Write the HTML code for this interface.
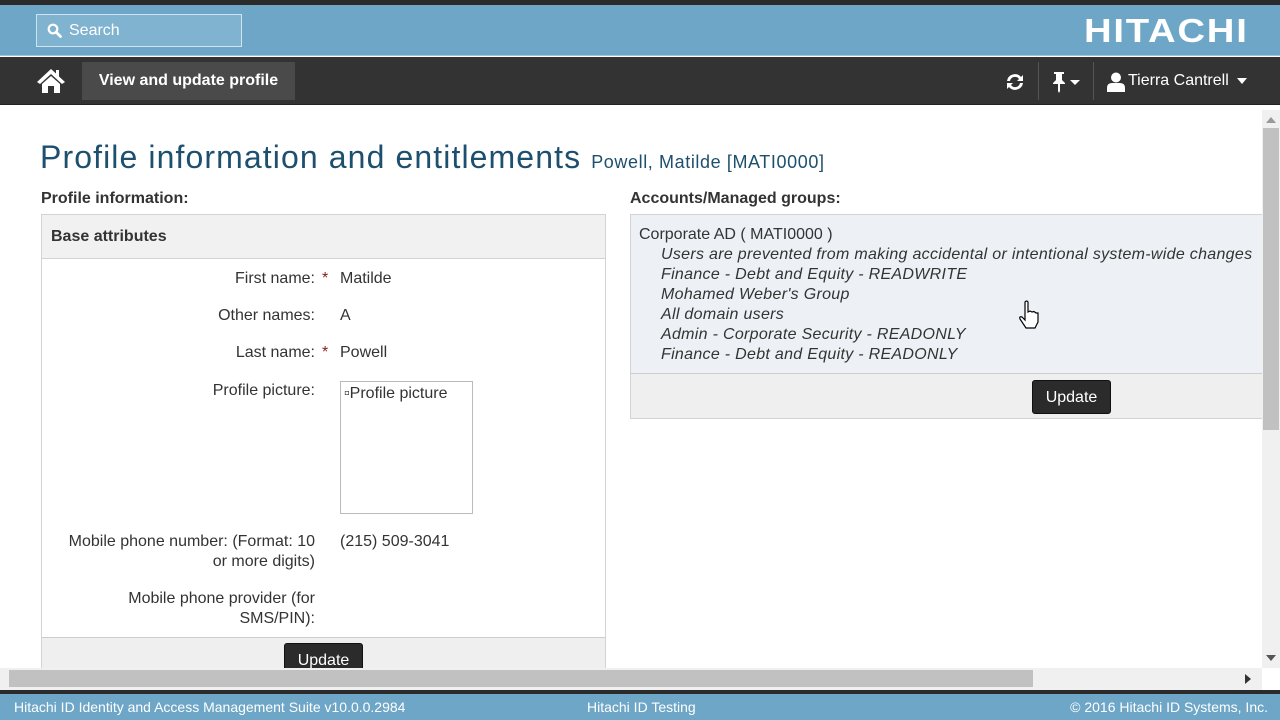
<!DOCTYPE html>
<html><head><meta charset="utf-8"><style>
*{box-sizing:border-box;margin:0;padding:0}
body{width:1280px;height:720px;overflow:hidden;font-family:"Liberation Sans",sans-serif;background:#fff;position:relative;color:#333}
.abs{position:absolute}
#top{left:0;top:0;width:1280px;height:5px;background:#2b2b2b}
#hdr{left:0;top:5px;width:1280px;height:51px;background:#6da6c7;border-bottom:1px solid #9cc8de}
#search{left:36px;top:14px;width:206px;height:33px;border:1px solid #cfe4ef;background:#7fb3d0;color:#fff;font-size:16px;line-height:31px;padding-left:32px}
#logo{left:1084px;top:12px;color:#fff;font-weight:bold;font-size:33px;letter-spacing:1.5px;transform:scaleX(1.16);transform-origin:left}
#nav{left:0;top:57px;width:1280px;height:48px;background:#333;border-bottom:1px solid #222}
#crumb{left:82px;top:62px;width:213px;height:38px;background:#4a4a4a;color:#fff;font-weight:bold;font-size:16px;line-height:38px;text-align:center}
.navt{color:#fff;font-size:16px}
.sep{top:62px;width:1px;height:38px;background:#555}
h1{position:absolute;left:40px;top:139px;font-weight:normal;font-size:32px;letter-spacing:1.1px;color:#1d4f6e;white-space:nowrap}
h1 small{font-size:18px;letter-spacing:0.6px;color:#1d4f6e}
.lbl{font-size:16px;color:#333}
.b{font-weight:bold}
#lp{left:41px;top:214px;width:565px;height:460px;border:1px solid #d3d3d3}
#lph{height:44px;background:#f1f1f1;border-bottom:1px solid #d3d3d3;font-weight:bold;font-size:16px;line-height:43px;padding-left:9px}
.r{position:absolute;font-size:16px;color:#333}
.star{color:#8b1a1a}
#pic{left:340px;top:381px;width:133px;height:133px;border:1px solid #bbb;font-size:16px;padding:3px 0 0 3px;white-space:nowrap;overflow:hidden}
#lpf{left:42px;top:637px;width:563px;height:37px;background:#efefef;border-top:1px solid #ccc}
.btn{position:absolute;background:#2b2b2b;color:#fff;font-size:16px;text-align:center;border-radius:3px;border:1px solid #111}
#rp{left:630px;top:214px;width:632px;height:205px;border:1px solid #d3d3d3;border-right:none;background:#edf1f5}
#rpf{left:631px;top:373px;width:631px;height:45px;background:#efefef;border-top:1px solid #ccc}
.it{position:absolute;left:661px;font-style:italic;font-size:16px;color:#333;white-space:nowrap;letter-spacing:0.3px}
#vs{left:1262px;top:110px;width:18px;height:558px;background:#f0f0f0}
#hs{left:0;top:668px;width:1262px;height:22px;background:#f0f0f0}
#foot{left:0;top:690px;width:1280px;height:30px;background:#6da6c7;border-top:4px solid #2b2b2b;color:#fff;font-size:14px;line-height:26px}
</style></head><body>
<div id="top" class="abs"></div>
<div id="hdr" class="abs"></div>
<div id="search" class="abs">Search</div>
<svg class="abs" style="left:47px;top:23px" width="15" height="15" viewBox="0 0 15 15"><circle cx="6" cy="6" r="4.3" fill="none" stroke="#fff" stroke-width="2.2"/><line x1="9" y1="9" x2="13.5" y2="13.5" stroke="#fff" stroke-width="2.8" stroke-linecap="round"/></svg>
<div id="logo" class="abs">HITACHI</div>
<div id="nav" class="abs"></div>
<svg class="abs" style="left:36px;top:67px" width="30" height="27" viewBox="0 0 30 27"><path d="M15 2 L1 15 L4 17 L15 7 L26 17 L29 15 L23 9.5 V3 H20 V6.5 Z" fill="#fff"/><path d="M6 17 L15 9 L24 17 V26 H18 V19 H12 V26 H6 Z" fill="#fff"/></svg>
<div id="crumb" class="abs">View and update profile</div>
<svg class="abs" style="left:1004px;top:71px" width="22" height="22" viewBox="0 0 22 22"><path d="M3 10 A8 8 0 0 1 17 6 L19 4 V10 H13 L15 8 A5 5 0 0 0 6 10 Z M19 12 A8 8 0 0 1 5 16 L3 18 V12 H9 L7 14 A5 5 0 0 0 16 12 Z" fill="#fff"/></svg>
<div class="abs sep" style="left:1038px"></div>
<svg class="abs" style="left:1050px;top:71px" width="32" height="22" viewBox="0 0 32 22"><path d="M4 1 H14 V3 H12 V9 L15 12 V13 H10 V20 L9 22 L8 20 V13 H3 V12 L6 9 V3 H4 Z" fill="#fff"/><path d="M20 9 H30 L25 14 Z" fill="#fff"/></svg>
<div class="abs sep" style="left:1093px"></div>
<svg class="abs" style="left:1107px;top:72px" width="18" height="20" viewBox="0 0 18 20"><circle cx="9" cy="5.5" r="5" fill="#fff"/><path d="M0 20 V16 Q0 11 5 11 H13 Q18 11 18 16 V20 Z" fill="#fff"/></svg>
<div class="abs navt" style="left:1128px;top:72px">Tierra Cantrell</div>
<svg class="abs" style="left:1237px;top:78px" width="10" height="6"><path d="M0 0 H10 L5 6 Z" fill="#fff"/></svg>
<h1>Profile information and entitlements <small>Powell, Matilde [MATI0000]</small></h1>
<div class="abs lbl b" style="left:41px;top:190px">Profile information:</div>
<div class="abs lbl b" style="left:630px;top:190px">Accounts/Managed groups:</div>
<div id="lp" class="abs"><div id="lph">Base attributes</div></div>
<div class="r" style="top:270px;right:965px">First name:</div><div class="r star" style="left:322px;top:270px">*</div><div class="r" style="left:340px;top:270px">Matilde</div>
<div class="r" style="top:307px;right:965px">Other names:</div><div class="r" style="left:340px;top:307px">A</div>
<div class="r" style="top:344px;right:965px">Last name:</div><div class="r star" style="left:322px;top:344px">*</div><div class="r" style="left:340px;top:344px">Powell</div>
<div class="r" style="top:382px;right:965px">Profile picture:</div>
<div id="pic" class="abs">▫Profile picture</div>
<div class="r" style="top:532px;right:965px;text-align:right;line-height:20px">Mobile phone number: (Format: 10<br>or more digits)</div>
<div class="r" style="left:340px;top:533px">(215) 509-3041</div>
<div class="r" style="top:589px;right:965px;text-align:right;line-height:20px">Mobile phone provider (for<br>SMS/PIN):</div>
<div id="lpf" class="abs"></div>
<div class="btn" style="left:284px;top:643px;width:79px;height:32px;line-height:34px">Update</div>
<div id="rp" class="abs"></div>
<div class="abs lbl" style="left:639px;top:226px">Corporate AD ( MATI0000 )</div>
<div class="it" style="top:246px">Users are prevented from making accidental or intentional system-wide changes</div>
<div class="it" style="top:266px">Finance - Debt and Equity - READWRITE</div>
<div class="it" style="top:286px">Mohamed Weber's Group</div>
<div class="it" style="top:306px">All domain users</div>
<div class="it" style="top:326px">Admin - Corporate Security - READONLY</div>
<div class="it" style="top:346px">Finance - Debt and Equity - READONLY</div>
<div id="rpf" class="abs"></div>
<div class="btn" style="left:1032px;top:380px;width:79px;height:34px;line-height:33px">Update</div>
<svg class="abs" style="left:1017px;top:300px" width="24" height="30" viewBox="0 0 24 30"><path d="M8 2 Q10 0 11 2 V12 L13 11 L15 12 L17 11.5 L19 13 L21 13 V22 L18 28 H9 L3 19 Q2 16 5 17 L8 20 Z" fill="#fff" stroke="#000" stroke-width="1.2"/></svg>
<div id="vs" class="abs"></div>
<div class="abs" style="left:1263px;top:128px;width:16px;height:302px;background:#c1c1c1"></div>
<svg class="abs" style="left:1266px;top:116px" width="10" height="8"><path d="M0 7 L5 1 L10 7 Z" fill="#999"/></svg>
<svg class="abs" style="left:1266px;top:654px" width="10" height="8"><path d="M0 1 L5 7 L10 1 Z" fill="#555"/></svg>
<div id="hs" class="abs"></div>
<div class="abs" style="left:9px;top:670px;width:1024px;height:17px;background:#c1c1c1"></div>
<svg class="abs" style="left:1244px;top:674px" width="8" height="10"><path d="M1 0 L7 5 L1 10 Z" fill="#333"/></svg>
<div id="foot" class="abs"><span class="abs" style="left:14px">Hitachi ID Identity and Access Management Suite v10.0.0.2984</span><span class="abs" style="left:587px">Hitachi ID Testing</span><span class="abs" style="right:12px">© 2016 Hitachi ID Systems, Inc.</span></div>
</body></html>
